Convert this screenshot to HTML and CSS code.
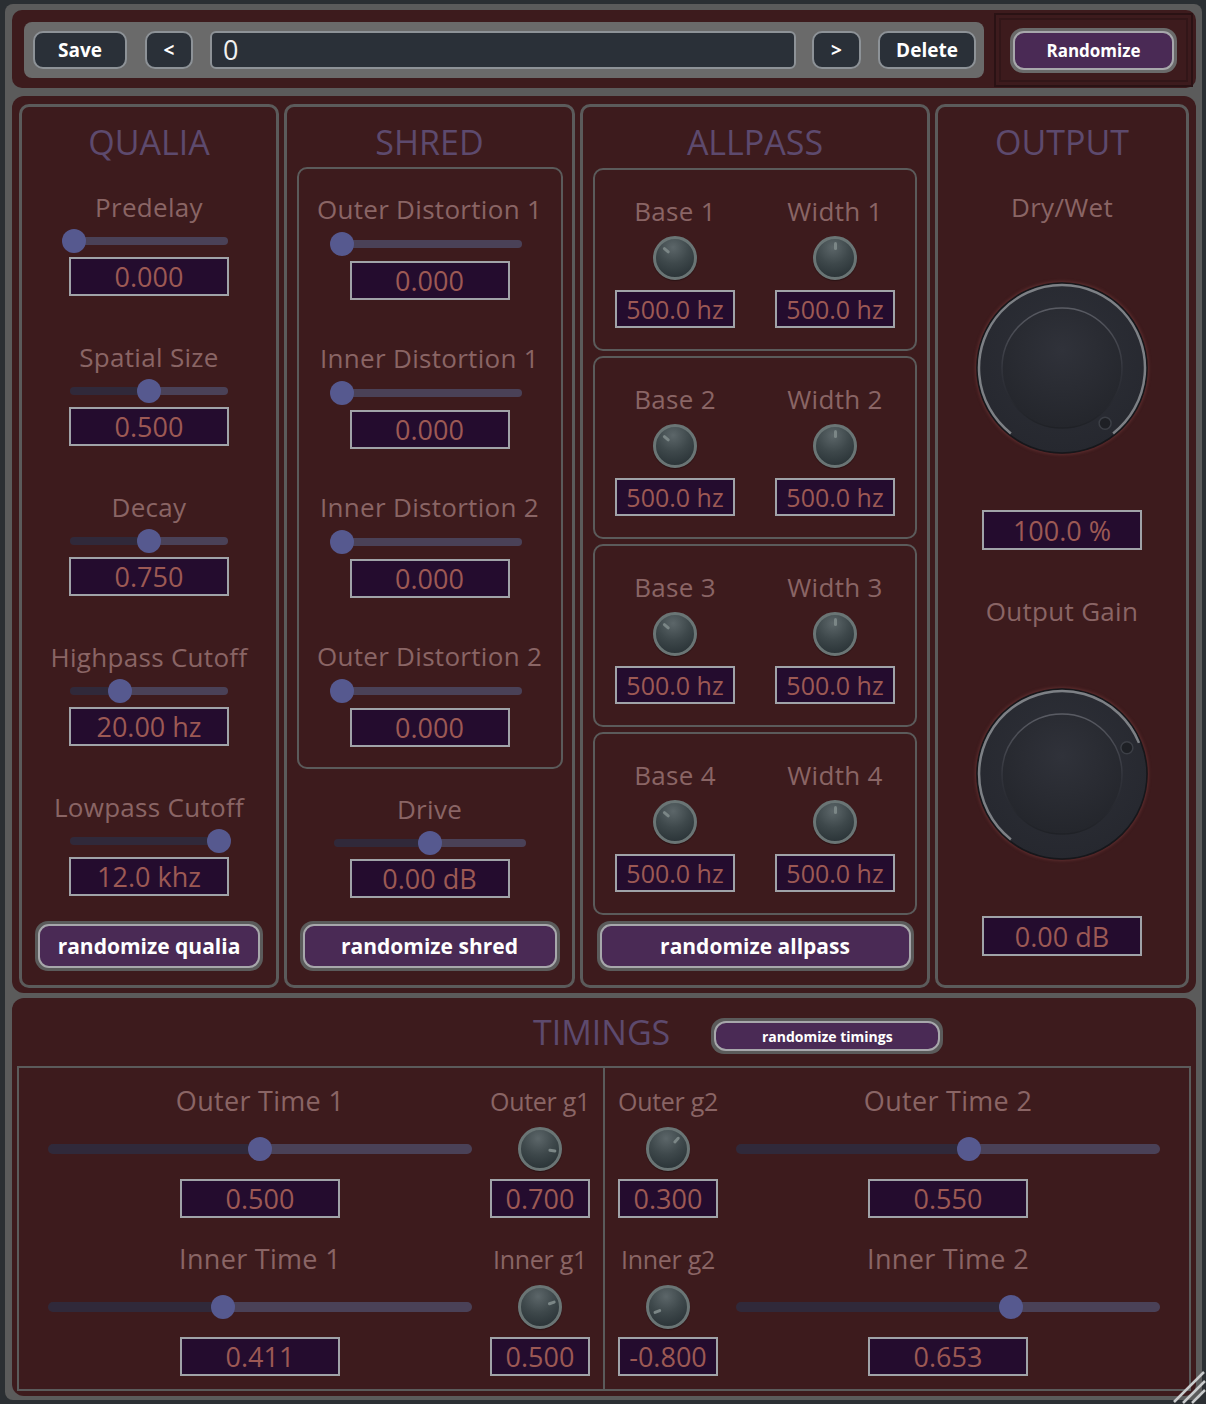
FILE: index.html
```html
<!DOCTYPE html>
<html>
<head>
<meta charset="utf-8">
<title>Qualia</title>
<link rel="stylesheet" href="styles.css">
</head>
<body>
<div class="frame">
  <header class="topbar">
    <div class="toolbar">
      <div class="tb-btn save">Save</div>
      <div class="tb-btn prev">&lt;</div>
      <div class="preset-field">0</div>
      <div class="tb-btn next">&gt;</div>
      <div class="tb-btn delete">Delete</div>
    </div>
    <div class="rand-slot">
      <div class="well well-top"><div class="pill pill-top">Randomize</div></div>
    </div>
  </header>

  <main class="main">
    <section class="panel qualia">
      <h2 class="title">QUALIA</h2>
      <div class="ctrl">
        <div class="label">Predelay</div>
        <div class="slot"><div class="slider s-qualia" style="--v:0"></div></div>
        <div class="value">0.000</div>
      </div>
      <div class="ctrl">
        <div class="label">Spatial Size</div>
        <div class="slot"><div class="slider s-qualia" style="--v:0.5"></div></div>
        <div class="value">0.500</div>
      </div>
      <div class="ctrl">
        <div class="label">Decay</div>
        <div class="slot"><div class="slider s-qualia" style="--v:0.5"></div></div>
        <div class="value">0.750</div>
      </div>
      <div class="ctrl">
        <div class="label">Highpass Cutoff</div>
        <div class="slot"><div class="slider s-qualia" style="--v:0.307"></div></div>
        <div class="value">20.00 hz</div>
      </div>
      <div class="ctrl">
        <div class="label">Lowpass Cutoff</div>
        <div class="slot"><div class="slider s-qualia" style="--v:0.967"></div></div>
        <div class="value">12.0 khz</div>
      </div>
      <div class="well well-sec w-qualia"><div class="pill">randomize qualia</div></div>
    </section>

    <section class="panel shred">
      <h2 class="title">SHRED</h2>
      <div class="subbox">
        <div class="ctrl">
          <div class="label">Outer Distortion 1</div>
          <div class="slot"><div class="slider s-shred" style="--v:0"></div></div>
          <div class="value">0.000</div>
        </div>
        <div class="ctrl">
          <div class="label">Inner Distortion 1</div>
          <div class="slot"><div class="slider s-shred" style="--v:0"></div></div>
          <div class="value">0.000</div>
        </div>
        <div class="ctrl">
          <div class="label">Inner Distortion 2</div>
          <div class="slot"><div class="slider s-shred" style="--v:0"></div></div>
          <div class="value">0.000</div>
        </div>
        <div class="ctrl">
          <div class="label">Outer Distortion 2</div>
          <div class="slot"><div class="slider s-shred" style="--v:0"></div></div>
          <div class="value">0.000</div>
        </div>
      </div>
      <div class="ctrl drive">
        <div class="label">Drive</div>
        <div class="slot"><div class="slider s-drive" style="--v:0.5"></div></div>
        <div class="value">0.00 dB</div>
      </div>
      <div class="well well-sec w-shred"><div class="pill">randomize shred</div></div>
    </section>

    <section class="panel allpass">
      <h2 class="title">ALLPASS</h2>
      <div class="ap-box">
        <div class="ap-cell"><div class="label">Base 1</div><div class="kslot"><div class="knob" style="--a:-50deg"></div></div><div class="value ap-val">500.0 hz</div></div>
        <div class="ap-cell"><div class="label">Width 1</div><div class="kslot"><div class="knob" style="--a:0deg"></div></div><div class="value ap-val">500.0 hz</div></div>
      </div>
      <div class="ap-box">
        <div class="ap-cell"><div class="label">Base 2</div><div class="kslot"><div class="knob" style="--a:-50deg"></div></div><div class="value ap-val">500.0 hz</div></div>
        <div class="ap-cell"><div class="label">Width 2</div><div class="kslot"><div class="knob" style="--a:0deg"></div></div><div class="value ap-val">500.0 hz</div></div>
      </div>
      <div class="ap-box">
        <div class="ap-cell"><div class="label">Base 3</div><div class="kslot"><div class="knob" style="--a:-50deg"></div></div><div class="value ap-val">500.0 hz</div></div>
        <div class="ap-cell"><div class="label">Width 3</div><div class="kslot"><div class="knob" style="--a:0deg"></div></div><div class="value ap-val">500.0 hz</div></div>
      </div>
      <div class="ap-box">
        <div class="ap-cell"><div class="label">Base 4</div><div class="kslot"><div class="knob" style="--a:-50deg"></div></div><div class="value ap-val">500.0 hz</div></div>
        <div class="ap-cell"><div class="label">Width 4</div><div class="kslot"><div class="knob" style="--a:0deg"></div></div><div class="value ap-val">500.0 hz</div></div>
      </div>
      <div class="well well-sec w-allpass"><div class="pill">randomize allpass</div></div>
    </section>

    <section class="panel output">
      <h2 class="title">OUTPUT</h2>
      <div class="label out-label1">Dry/Wet</div>
      <svg class="bigknob bk1" viewBox="0 0 172 172" width="172" height="172">
        <defs>
          <radialGradient id="kbA" cx="50%" cy="35%" r="65%"><stop offset="0" stop-color="#30323a"/><stop offset="1" stop-color="#24262c"/></radialGradient>
          <linearGradient id="krA" x1="0" y1="0" x2="0" y2="1"><stop offset="0" stop-color="#5a5c64"/><stop offset="0.55" stop-color="#30323a"/><stop offset="1" stop-color="#1f2126"/></linearGradient>
          <radialGradient id="koA" cx="50%" cy="40%" r="60%"><stop offset="0" stop-color="#2e3038"/><stop offset="1" stop-color="#26282f"/></radialGradient>
        </defs>
        <circle cx="86" cy="86" r="85" fill="url(#koA)" stroke="#16171b" stroke-width="1.5"/>
        <path d="M34.9 151.4 A83 83 0 1 1 137.1 151.4" fill="none" stroke="#7d8085" stroke-width="2.5"/>
        <circle cx="86" cy="86" r="60" fill="url(#kbA)" stroke="url(#krA)" stroke-width="1.5"/>
        <circle cx="129.1" cy="141.2" r="6" fill="#1e2025" stroke="#3c3f46" stroke-width="1.5"/>
      </svg>
      <div class="value out-val1">100.0 %</div>
      <div class="label out-label2">Output Gain</div>
      <svg class="bigknob bk2" viewBox="0 0 172 172" width="172" height="172">
        <defs>
          <radialGradient id="kbB" cx="50%" cy="35%" r="65%"><stop offset="0" stop-color="#30323a"/><stop offset="1" stop-color="#24262c"/></radialGradient>
          <linearGradient id="krB" x1="0" y1="0" x2="0" y2="1"><stop offset="0" stop-color="#5a5c64"/><stop offset="0.55" stop-color="#30323a"/><stop offset="1" stop-color="#1f2126"/></linearGradient>
          <radialGradient id="koB" cx="50%" cy="40%" r="60%"><stop offset="0" stop-color="#2e3038"/><stop offset="1" stop-color="#26282f"/></radialGradient>
        </defs>
        <circle cx="86" cy="86" r="85" fill="url(#koB)" stroke="#16171b" stroke-width="1.5"/>
        <path d="M34.9 151.4 A83 83 0 1 1 163 54.9" fill="none" stroke="#7d8085" stroke-width="2.5"/>
        <circle cx="86" cy="86" r="60" fill="url(#kbB)" stroke="url(#krB)" stroke-width="1.5"/>
        <circle cx="150.9" cy="59.8" r="6" fill="#1e2025" stroke="#3c3f46" stroke-width="1.5"/>
      </svg>
      <div class="value out-val2">0.00 dB</div>
    </section>
  </main>

  <section class="timings">
    <div class="t-head">
      <h2 class="title t-title">TIMINGS</h2>
      <div class="well well-t"><div class="pill pill-t">randomize timings</div></div>
    </div>
    <div class="t-box">
      <div class="t-half t-left">
        <div class="tcell"><div class="label t-label">Outer Time 1</div><div class="tslot"><div class="slider s-time" style="--v:0.5"></div></div><div class="value">0.500</div></div>
        <div class="tcell"><div class="label t-label g">Outer g1</div><div class="tslot"><div class="knob" style="--a:98deg"></div></div><div class="value g-val">0.700</div></div>
        <div class="tcell"><div class="label t-label">Inner Time 1</div><div class="tslot"><div class="slider s-time" style="--v:0.411"></div></div><div class="value">0.411</div></div>
        <div class="tcell"><div class="label t-label g">Inner g1</div><div class="tslot"><div class="knob" style="--a:70deg"></div></div><div class="value g-val">0.500</div></div>
      </div>
      <div class="t-half t-right">
        <div class="tcell"><div class="label t-label g">Outer g2</div><div class="tslot"><div class="knob" style="--a:42deg"></div></div><div class="value g-val">0.300</div></div>
        <div class="tcell"><div class="label t-label">Outer Time 2</div><div class="tslot"><div class="slider s-time" style="--v:0.55"></div></div><div class="value">0.550</div></div>
        <div class="tcell"><div class="label t-label g">Inner g2</div><div class="tslot"><div class="knob" style="--a:-112deg"></div></div><div class="value g-val">-0.800</div></div>
        <div class="tcell"><div class="label t-label">Inner Time 2</div><div class="tslot"><div class="slider s-time" style="--v:0.653"></div></div><div class="value">0.653</div></div>
      </div>
    </div>
  </section>
</div>
<svg class="grip" viewBox="0 0 36 40" width="36" height="40">
  <path d="M34 8 L4 38 M35 17 L13 39 M35 26 L22 39" stroke="#c9cbcc" stroke-width="2.5" fill="none"/>
</svg>
</body>
</html>
```

FILE: styles.css
```css
* { box-sizing: border-box; margin: 0; padding: 0; }

html, body {
  width: 1206px;
  height: 1404px;
  overflow: hidden;
}

body {
  background: #2b2f33;
  font-family: "Open Sans", "Noto Sans", "DejaVu Sans", sans-serif;
  position: relative;
}

.frame {
  margin: 4px 4px 0 5px;
  width: 1197px;
  height: 1396px;
  background: #5b5b5b;
  border-radius: 8px;
  padding: 6px 6px 4px 7px;
  display: flex;
  flex-direction: column;
}

/* ---------- top bar ---------- */
.topbar {
  height: 78px;
  background: #3d1b1d;
  border-radius: 10px;
  display: flex;
  align-items: center;
  padding-left: 12px;
  flex: none;
}

.toolbar {
  width: 960px;
  height: 56px;
  margin-top: 2px;
  background: #6a6a6a;
  border-radius: 8px;
  display: flex;
  align-items: center;
  padding-left: 9px;
}

.tb-btn {
  height: 38px;
  background: #2a3038;
  border: 2px solid #8d9297;
  border-radius: 10px;
  color: #ffffff;
  font-weight: 700;
  font-size: 19px;
  display: flex;
  align-items: center;
  justify-content: center;
}
.save { width: 94px; }
.prev { width: 48px; margin-left: 18px; }
.next { width: 49px; margin-left: 16px; }
.delete { width: 98px; margin-left: 17px; }

.preset-field {
  width: 586px;
  height: 38px;
  margin-left: 17px;
  background: #2a3038;
  border: 2px solid #8d9297;
  border-radius: 6px;
  color: #f0f0f0;
  font-size: 27px;
  line-height: 34px;
  padding-left: 11px;
}

.rand-slot {
  margin-left: 10px;
  margin-top: 2px;
  width: 199px;
  height: 74px;
  border: 2px solid #2a1214;
  box-shadow: inset 0 0 0 3px #3d1b1d, inset 0 0 0 5px #321618;
  display: flex;
  align-items: center;
  justify-content: center;
}

/* ---------- pills ---------- */
.well {
  background: #5b5b5b;
  border-radius: 13px;
  padding: 3px;
  flex: none;
}
.well-top { background: #6a6a6a; width: 167px; height: 45px; margin-top: 1px; }

.pill {
  width: 100%;
  height: 100%;
  background: #4a2a55;
  border: 2px solid #a7a7ab;
  border-radius: 11px;
  color: #ffffff;
  font-weight: 700;
  font-size: 21px;
  display: flex;
  align-items: center;
  justify-content: center;
  white-space: nowrap;
}
.pill-top { font-size: 17px; }

.well-sec { margin-top: auto; margin-bottom: 14px; height: 50px; }
.w-qualia { width: 228px; }
.w-shred { width: 260px; }
.w-allpass { width: 317px; }

/* ---------- main ---------- */
.main {
  height: 897px;
  margin-top: 8px;
  background: #3d1b1d;
  border-radius: 12px;
  display: flex;
  gap: 5px;
  padding: 8px 0 0 7px;
  flex: none;
}

.panel {
  height: 884px;
  border: 3px solid #5b5b5b;
  border-radius: 10px;
  display: flex;
  flex-direction: column;
  align-items: center;
  padding-top: 15px;
  flex: none;
}
.qualia { width: 260px; }
.shred { width: 291px; }
.allpass { width: 350px; }
.output { width: 254px; }

.title {
  font-size: 34px;
  line-height: 40px;
  font-weight: 400;
  color: #5d4a6e;
  white-space: nowrap;
}

.label {
  font-size: 26px;
  line-height: 30px;
  letter-spacing: 0.3px;
  color: #8a6565;
  white-space: nowrap;
  text-align: center;
}

.value {
  width: 160px;
  height: 39px;
  background: #240c2e;
  border: 2px solid #a0a3a8;
  color: #9c5954;
  font-size: 27px;
  display: flex;
  align-items: center;
  justify-content: center;
  white-space: nowrap;
  flex: none;
}

.ctrl {
  display: flex;
  flex-direction: column;
  align-items: center;
}
.qualia .ctrl:first-of-type { margin-top: 30px; }
.qualia .ctrl + .ctrl { margin-top: 46px; }

.slot {
  height: 35px;
  padding-top: 2px;
  display: flex;
  align-items: center;
  justify-content: center;
}

/* sliders */
.slider {
  --v: 0;
  --pad: 4px;
  position: relative;
  height: 8px;
  border-radius: 4px;
  background: linear-gradient(to right,
    #30293a 0,
    #30293a calc(var(--pad) + var(--v) * (100% - 2 * var(--pad))),
    #4a4157 calc(var(--pad) + var(--v) * (100% - 2 * var(--pad))),
    #4a4157 100%);
}
.slider::after {
  content: "";
  position: absolute;
  top: 50%;
  left: calc(var(--pad) + var(--v) * (100% - 2 * var(--pad)) - 12px);
  width: 24px;
  height: 24px;
  margin-top: -12px;
  border-radius: 50%;
  background: #56598f;
}
.s-qualia { width: 158px; }
.s-shred { width: 184px; }
.s-drive { width: 192px; }
.s-time { width: 424px; height: 10px; border-radius: 5px; --pad: 5px; }

/* shred */
.subbox {
  width: 266px;
  height: 602px;
  margin-top: 5px;
  border: 2px solid #5b5b5b;
  border-radius: 10px;
  padding-top: 25px;
  display: flex;
  flex-direction: column;
  align-items: center;
}
.subbox .ctrl + .ctrl { margin-top: 43px; }
.subbox .slot { height: 37px; padding-top: 3px; }
.drive { margin-top: 25px; }

/* small knobs */
.knob {
  position: relative;
  width: 44px;
  height: 44px;
  border-radius: 50%;
  border: 3px solid #6a7575;
  background: radial-gradient(circle at 45% 22%, #5c6669 0%, #3e484b 45%, #232c30 100%);
  box-shadow: 0 1px 1px rgba(0,0,0,0.35);
}
.knob::after {
  content: "";
  position: absolute;
  left: calc(50% - 1.5px);
  top: 3px;
  width: 3px;
  height: 8px;
  border-radius: 1.5px;
  background: #7b8686;
  transform-origin: 1.5px 16px;
  transform: rotate(var(--a));
}

/* allpass */
.ap-box {
  width: 324px;
  height: 183px;
  margin-top: 5px;
  border: 2px solid #5b5b5b;
  border-radius: 10px;
  padding-top: 26px;
  display: grid;
  grid-template-columns: 160px 160px;
}
.allpass .title + .ap-box { margin-top: 6px; }
.ap-cell {
  display: flex;
  flex-direction: column;
  align-items: center;
}
.kslot {
  height: 64px;
  display: flex;
  align-items: center;
  justify-content: center;
}
.ap-val { width: 120px; height: 38px; font-size: 25px; }

/* output */
.out-label1 { margin-top: 30px; }
.bigknob {
  display: block;
  border-radius: 50%;
  box-shadow: 0 0 3px 1px rgba(120, 60, 60, 0.55);
  flex: none;
}
.bk1 { margin-top: 60px; }
.out-val1 { margin-top: 56px; height: 40px; }
.out-label2 { margin-top: 46px; }
.bk2 { margin-top: 62px; }
.out-val2 { margin-top: 56px; height: 40px; }

/* ---------- timings ---------- */
.timings {
  height: 398px;
  margin-top: 5px;
  background: #3d1b1d;
  border-radius: 12px;
  padding: 0 5px 5px 5px;
  display: flex;
  flex-direction: column;
  flex: none;
}
.t-head {
  height: 68px;
  display: flex;
  align-items: center;
  padding-left: 516px;
  flex: none;
}
.well-t {
  width: 232px;
  height: 36px;
  margin-left: 41px;
  align-self: flex-end;
  margin-bottom: 12px;
}
.pill-t { font-size: 14px; border-radius: 12px; }

.t-box {
  flex: 1;
  border: 2px solid #5b5b5b;
  display: flex;
}
.t-half {
  display: grid;
  column-gap: 18px;
  row-gap: 26px;
  padding-top: 18px;
  align-content: start;
}
.t-left {
  width: 584px;
  grid-template-columns: 424px 100px;
  padding-left: 29px;
}
.t-right {
  flex: 1;
  border-left: 2px solid #5b5b5b;
  grid-template-columns: 100px 424px;
  padding-left: 13px;
}
.tcell {
  display: flex;
  flex-direction: column;
  align-items: center;
}
.t-label { font-size: 27px; }
.t-label.g { font-size: 25px; letter-spacing: -0.3px; }
.tslot {
  height: 63px;
  padding-top: 3px;
  display: flex;
  align-items: center;
  justify-content: center;
}
.g-val { width: 100px; }

.grip {
  position: absolute;
  right: 0;
  bottom: 0;
}
```
